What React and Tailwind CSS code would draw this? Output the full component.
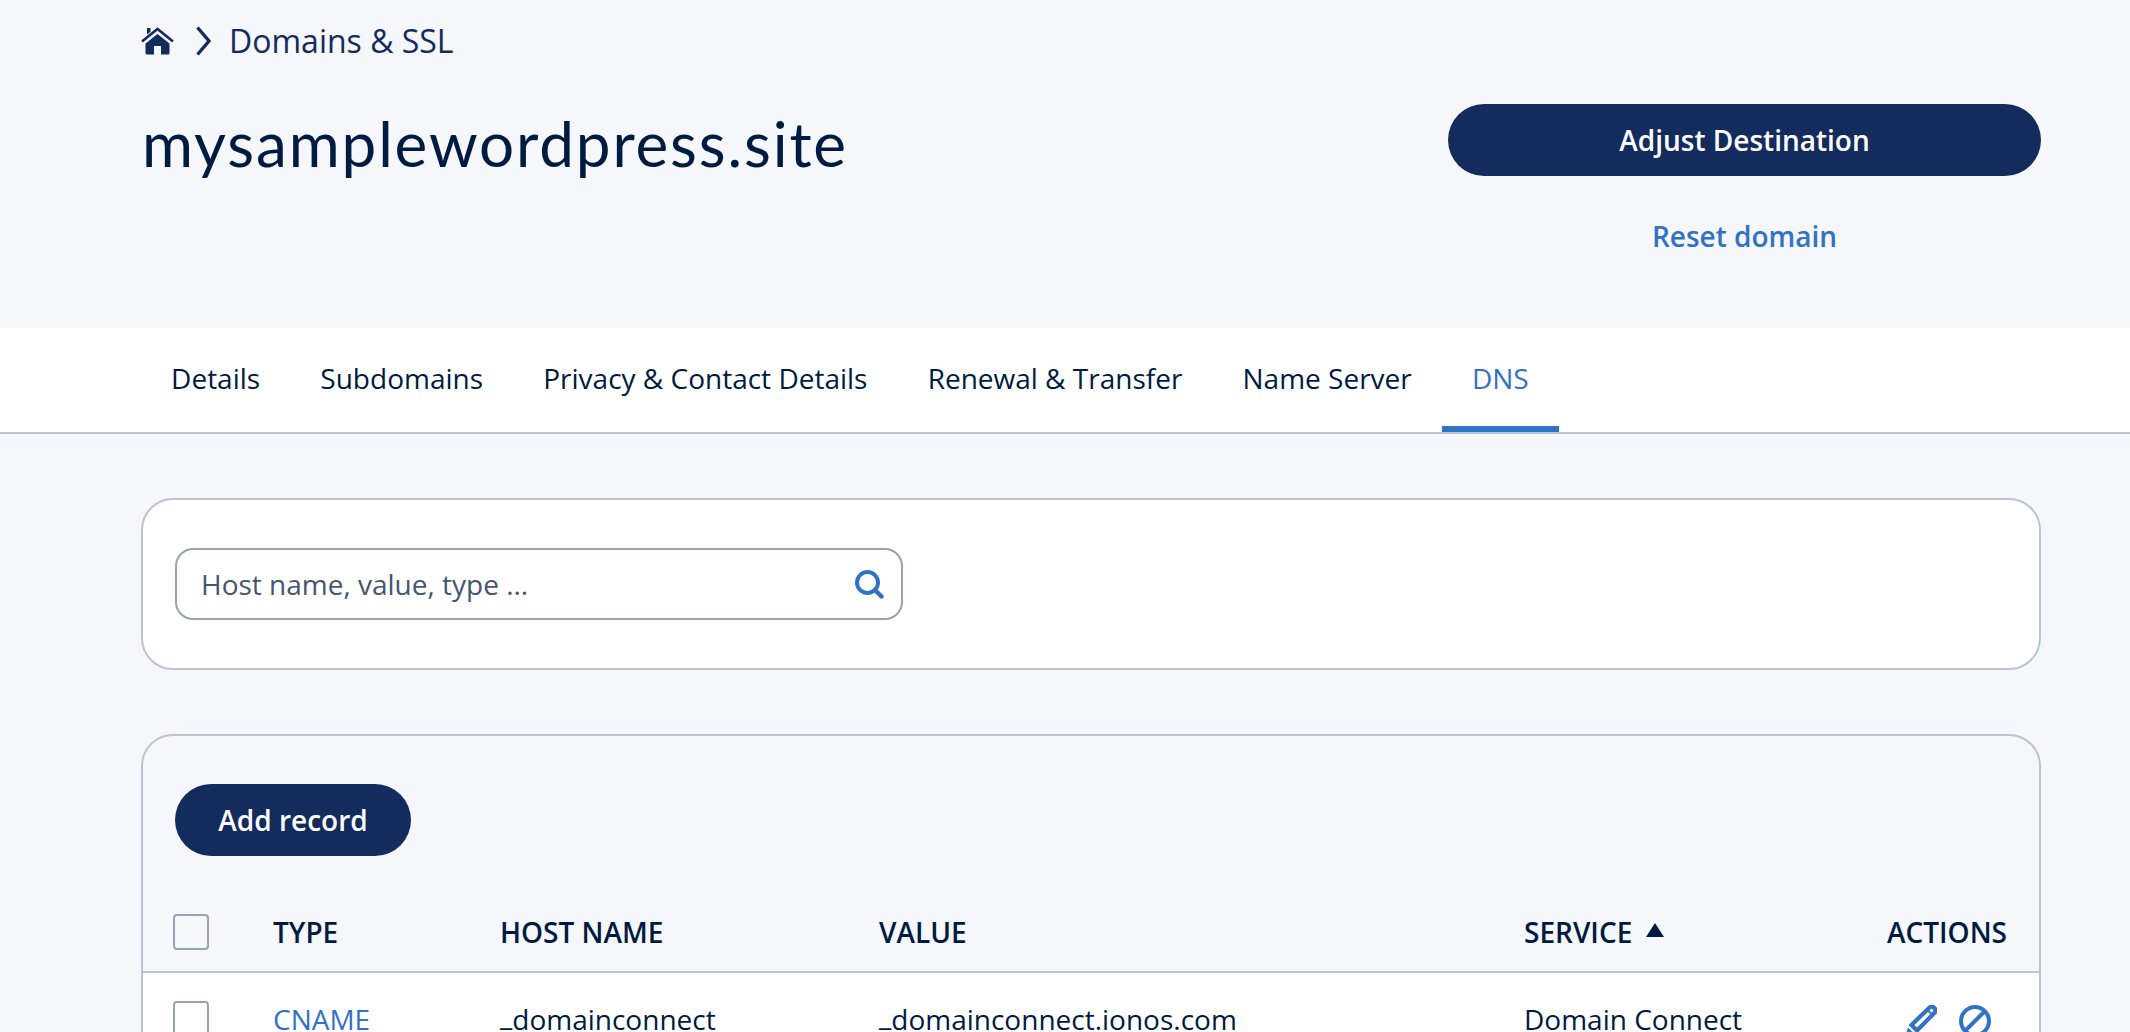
const sans = "font-['Open_Sans',sans-serif]";

const tabs = ['Details', 'Subdomains', 'Privacy & Contact Details', 'Renewal & Transfer', 'Name Server', 'DNS'];

function HomeIcon() {
  return (
    <svg width="33" height="28" viewBox="0 0 33 28" className="shrink-0">
      <path d="M1 14.500 16.500 2 32 14.500" fill="none" stroke="#142b5e" strokeWidth="2.600" />
      <path d="M6 7.500V1h3.500v3.800z" fill="#142b5e" />
      <path d="M4.500 16.500 16.500 7l12 9.500V26c0 .8-.5 1.500-1.500 1.500h-7V19h-7v8.500H6c-1 0-1.500-.7-1.500-1.500z" fill="#142b5e" />
    </svg>
  );
}

function Chevron() {
  return (
    <svg width="16" height="30" viewBox="0 0 16 30" className="shrink-0">
      <path d="M1.500 1.500 13 15 1.500 28.500" fill="none" stroke="#142b5e" strokeWidth="3.400" />
    </svg>
  );
}

function SearchIcon() {
  return (
    <svg width="30" height="30" viewBox="0 0 30 30" className="shrink-0">
      <circle cx="13.500" cy="13.500" r="10.500" fill="none" stroke="#3272c4" strokeWidth="4" />
      <path d="M21 21l6.500 6.500" stroke="#3272c4" strokeWidth="4.500" strokeLinecap="round" />
    </svg>
  );
}

function PencilIcon() {
  return (
    <svg width="32" height="32" viewBox="0 0 32 32" className="shrink-0">
      <path d="M0 32l3-9.500 6.500 6.500z" fill="#3272c4" />
      <path d="M6.500 20 24.500 2.500c1.500-1.300 3-1.300 4.300 0l.9.900c1.300 1.300 1.300 2.900 0 4.200L12 25.500z" fill="none" stroke="#3272c4" strokeWidth="4.200" />
      <path d="M23 5.500l5.500 5.500" stroke="#3272c4" strokeWidth="2" />
    </svg>
  );
}

function BanIcon() {
  return (
    <svg width="32" height="32" viewBox="0 0 32 32" className="shrink-0">
      <circle cx="16" cy="16" r="14" fill="none" stroke="#3272c4" strokeWidth="4" />
      <path d="M6 26 26 6" stroke="#3272c4" strokeWidth="4" />
    </svg>
  );
}

function Checkbox({ className }) {
  return <span className={`block w-[36px] h-[36px] rounded-[4px] border-2 border-[#97a3b4] shrink-0 ${className}`} />;
}

export default function App() {
  return (
    <div className={`h-[1032px] overflow-hidden bg-[#f5f7fb] text-[#001b41] ${sans}`}>
      <div className="h-[328px] pl-[141px] pr-[89px] flex flex-col">
        <div className="flex items-center h-[28px] mt-[27px] text-[#142b5e]">
          <HomeIcon />
          <span className="ml-[22px]"><Chevron /></span>
          <span className="ml-[17px] text-[32px] leading-[28px]">Domains &amp; SSL</span>
        </div>
        <div className="flex justify-between items-start">
          <h1 className="mt-[48px] ml-[1px] font-['Lato',sans-serif] text-[62px] leading-[80px] tracking-[1.850px]">mysamplewordpress.site</h1>
          <div className="mt-[49px] w-[593px] flex flex-col items-center">
            <button className="w-full h-[72px] rounded-full bg-[#142b5e] text-white text-[28px] font-semibold">Adjust Destination</button>
            <a className="mt-[41px] text-[#3272c4] text-[28px] leading-[38px] font-semibold">Reset domain</a>
          </div>
        </div>
      </div>

      <div className="bg-white h-[106px] border-b-2 border-[#b9c5d3] pl-[141px] pr-[89px] flex">
        {tabs.map((t) => (
          <div key={t} className={`px-[30.100px] h-[104px] flex items-center text-[28px] ${t === 'DNS' ? 'text-[#3272c4] border-b-[6px] border-[#3272c4] pt-[2px]' : 'pb-[4px]'}`}>{t}</div>
        ))}
      </div>

      <div className="pl-[141px] pr-[89px] pt-[64px]">
        <div className="h-[172px] bg-white rounded-[32px] border-2 border-[#b9c5d3] px-[32px] flex items-center">
          <div className="w-[728px] h-[72px] rounded-[18px] border-2 border-[#97a3b4] bg-white flex items-center justify-between pl-[24px] pr-[17px]">
            <span className="text-[28px] text-[#46566f]">Host name, value, type ...</span>
            <SearchIcon />
          </div>
        </div>

        <div className="mt-[64px] rounded-t-[32px] border-2 border-[#b9c5d3]">
          <div className="pl-[32px] pt-[48px]">
            <button className="w-[236px] h-[72px] rounded-full bg-[#142b5e] text-white text-[28px] font-semibold">Add record</button>
          </div>
          <div className="flex items-center h-[117px] pt-[37px] border-b-2 border-[#b9c5d3] font-semibold text-[28px]">
            <div className="w-[130px] pl-[30px]"><Checkbox className="bg-transparent" /></div>
            <div className="w-[227px]">TYPE</div>
            <div className="w-[379px]">HOST NAME</div>
            <div className="w-[645px]">VALUE</div>
            <div className="w-[363px] flex items-center gap-[14px]">SERVICE
              <span className="w-0 h-0 border-x-[9px] border-x-transparent border-b-[14px] border-b-[#001b41] -mt-[4px]" />
            </div>
            <div>ACTIONS</div>
          </div>
          <div className="bg-white flex h-[120px] pt-[25px] text-[28px]">
            <div className="w-[130px] pl-[30px] pt-[3px]"><Checkbox className="bg-white" /></div>
            <div className="w-[227px] text-[#3272c4]">CNAME</div>
            <div className="w-[379px]"><span className="relative -top-[4px]">_</span>domainconnect</div>
            <div className="w-[645px]"><span className="relative -top-[4px]">_</span>domainconnect.ionos.com</div>
            <div className="w-[363px]">Domain Connect</div>
            <div className="flex gap-[22px] pl-[18px] pt-[7px]"><PencilIcon /><BanIcon /></div>
          </div>
        </div>
      </div>
    </div>
  );
}
